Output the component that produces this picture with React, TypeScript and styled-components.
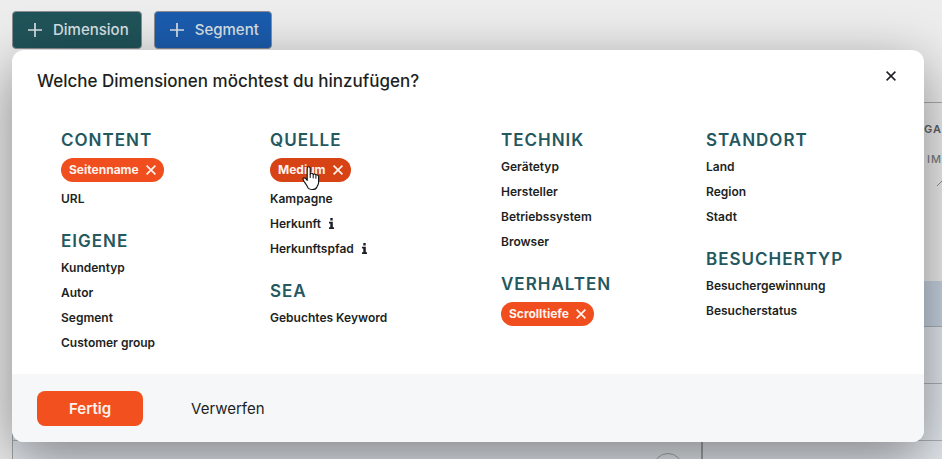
import React from "react";
import styled, { createGlobalStyle } from "styled-components";

const GlobalStyle = createGlobalStyle`
  *, *::before, *::after { box-sizing: border-box; }
  body {
    margin: 0;
    background: #ededee;
    color: #1d1f22;
    font-family: Inter, "Liberation Sans", sans-serif;
  }
  button { font: inherit; color: inherit; cursor: pointer; }
`;

const Page = styled.main`
  position: relative;
  min-height: 100vh;
  overflow: hidden;
  background: #ededee;
`;

const Toolbar = styled.div`
  display: flex;
  gap: 12px;
  padding: 11px 12px 0;
`;

const AddButton = styled.button<{ $color: string }>`
  display: flex;
  align-items: center;
  gap: 11px;
  height: 38px;
  padding: 0 12px 0 15px;
  border: 1px solid #8b8f93;
  border-radius: 4px;
  background: ${(p) => p.$color};
  color: #d9e0e4;
  font-size: 15px;
  font-weight: 500;
  line-height: 22px;
`;

const Report = styled.section`
  position: absolute;
  inset: 102px 0 0 12px;
  display: grid;
  grid-template-columns: 689fr 241fr;
  overflow: hidden;
  border-top: 1px solid #a9abad;
  border-left: 1px solid #a0a5a9;
`;

const ReportColumn = styled.div`
  display: flex;
  flex-direction: column;
  & + & { border-left: 2px solid #a0a5a9; }
`;

const ReportHead = styled.div`
  display: flex;
  flex-direction: column;
  align-items: flex-end;
  gap: 14px;
  height: 178px;
  padding-top: 18px;
  color: #5d6064;
  font-size: 11px;
  font-weight: 600;
  line-height: 16px;
  letter-spacing: 1px;
`;

const SubHead = styled.span`
  color: #7d8084;
  font-weight: 500;
`;

const ReportRow = styled.div<{ $active?: boolean }>`
  display: flex;
  flex: none;
  justify-content: flex-end;
  height: ${(p) => (p.$active ? 46 : 57)}px;
  padding: 12px 18px;
  border-bottom: 1px solid #abb1b8;
  background: ${(p) => (p.$active ? "#c6d3e1" : "#e3e8ed")};
`;

const Circle = styled.span`
  width: 30px;
  height: 30px;
  border: 1px solid #a0a5a9;
  border-radius: 50%;
`;

const Dialog = styled.section`
  position: absolute;
  top: 50px;
  left: 12px;
  right: 18px;
  border-radius: 12px;
  background: #fff;
  box-shadow: 0 16px 56px rgba(0, 0, 0, 0.44);
`;

const DialogHeader = styled.header`
  display: flex;
  align-items: center;
  justify-content: space-between;
  padding: 16px 23px 0 25px;
`;

const Title = styled.h1`
  margin: 0;
  font-size: 17px;
  font-weight: 500;
  line-height: 30px;
`;

const CloseButton = styled.button`
  display: flex;
  align-items: center;
  justify-content: center;
  width: 20px;
  height: 20px;
  margin-bottom: 10px;
  padding: 0;
  border: 0;
  background: none;
`;

const Columns = styled.div`
  display: grid;
  grid-template-columns: 209fr 231fr 205fr 194fr;
  padding: 30px 24px 19px 49px;
`;

const Column = styled.div`
  display: flex;
  flex-direction: column;
  gap: 16px;
`;

const GroupTitle = styled.h2`
  margin: 0;
  color: #24585f;
  font-size: 17px;
  font-weight: 600;
  line-height: 28px;
  letter-spacing: 1px;
`;

const List = styled.ul`
  margin: 0;
  padding: 0;
  list-style: none;
`;

const Item = styled.li<{ $selected: boolean }>`
  display: flex;
  align-items: center;
  height: ${(p) => (p.$selected ? 32 : 25)}px;
`;

const Option = styled.button`
  display: flex;
  align-items: center;
  gap: 8px;
  padding: 0;
  border: 0;
  background: none;
  font-size: 12px;
  font-weight: 600;
  line-height: 20px;
`;

const Chip = styled.button<{ $hover?: boolean }>`
  position: relative;
  display: flex;
  align-items: center;
  gap: 7px;
  height: 24px;
  padding: 0 8px;
  border: 0;
  border-radius: 12px;
  background: ${(p) => (p.$hover ? "#d84315" : "#f04e1e")};
  color: #fff3ed;
  font-size: 12px;
  font-weight: 700;
  line-height: 20px;
`;

const Pointer = styled.svg`
  position: absolute;
  top: 8px;
  left: 32px;
  z-index: 1;
`;

const Footer = styled.footer`
  display: flex;
  align-items: center;
  gap: 16px;
  padding: 17px 25px 16px;
  border-radius: 0 0 12px 12px;
  background: #f5f7f9;
`;

const FooterButton = styled.button<{ $primary?: boolean }>`
  height: 35px;
  padding: 0 32px;
  border: 0;
  border-radius: 8px;
  background: ${(p) => (p.$primary ? "#f2501e" : "transparent")};
  color: ${(p) => (p.$primary ? "#fff3ed" : "#1d1f22")};
  font-size: 15px;
  font-weight: ${(p) => (p.$primary ? 600 : 400)};
  line-height: 20px;
`;

const Plus = () => (
  <svg width="14" height="14" viewBox="0 0 14 14" stroke="currentColor" strokeWidth="1.7" aria-hidden>
    <path d="M7 0v14M0 7h14" />
  </svg>
);

const Cross = ({ width = 1.7 }: { width?: number }) => (
  <svg width="10" height="10" viewBox="0 0 10 10" stroke="currentColor" strokeWidth={width} aria-hidden>
    <path d="M.6.6l8.8 8.8M9.4.6L.6 9.4" />
  </svg>
);

const Info = () => (
  <svg width="5" height="11" viewBox="0 0 5 11" fill="currentColor" aria-label="Info">
    <path d="M1.3 0h2.4v2.4H1.3zM0 3.7h3.8v5.6H5V11H0V9.3h1.3V5.4H0z" />
  </svg>
);

const HandPointer = () => (
  <Pointer width="18" height="25" viewBox="0 0 18 25" aria-hidden>
    <path
      d="M5.2 2.4c0-2.2 3-2.2 3 0v5.8c.3-1.3 2.8-1.3 3 .5.4-1 2.5-.9 2.7.6.6-.9 2.7-.5 2.7 1.2v6.2c0 2-1.3 3-1.7 4.3-.5 1.5-1.6 2.5-4.3 2.5-3 0-4.3-.6-5-2.4-.6-1.8-2-3.2-3.3-5.3-.8-1.4-1.6-2.4-1.3-3.2.5-1.2 2.1-.8 3 .3l1.2 1.5z"
      fill="#fff"
      stroke="#111"
      strokeWidth="1.1"
      strokeLinejoin="round"
    />
    <path d="M8.2 8v4M11.2 8.8v3.6M13.9 9.5v3.2" stroke="#111" strokeWidth="1" />
  </Pointer>
);

type Entry = { label: string; selected?: boolean; hover?: boolean; info?: boolean };
type Group = { title: string; entries: Entry[] };

const columns: Group[][] = [
  [
    { title: "CONTENT", entries: [{ label: "Seitenname", selected: true }, { label: "URL" }] },
    {
      title: "EIGENE",
      entries: [{ label: "Kundentyp" }, { label: "Autor" }, { label: "Segment" }, { label: "Customer group" }],
    },
  ],
  [
    {
      title: "QUELLE",
      entries: [
        { label: "Medium", selected: true, hover: true },
        { label: "Kampagne" },
        { label: "Herkunft", info: true },
        { label: "Herkunftspfad", info: true },
      ],
    },
    { title: "SEA", entries: [{ label: "Gebuchtes Keyword" }] },
  ],
  [
    {
      title: "TECHNIK",
      entries: [{ label: "Gerätetyp" }, { label: "Hersteller" }, { label: "Betriebssystem" }, { label: "Browser" }],
    },
    { title: "VERHALTEN", entries: [{ label: "Scrolltiefe", selected: true }] },
  ],
  [
    { title: "STANDORT", entries: [{ label: "Land" }, { label: "Region" }, { label: "Stadt" }] },
    { title: "BESUCHERTYP", entries: [{ label: "Besuchergewinnung" }, { label: "Besucherstatus" }] },
  ],
];

function DimensionItem({ label, selected = false, hover, info }: Entry) {
  return (
    <Item $selected={selected}>
      {selected ? (
        <Chip type="button" aria-pressed="true" $hover={hover}>
          {label}
          <Cross />
          {hover && <HandPointer />}
        </Chip>
      ) : (
        <Option type="button">
          {label}
          {info && <Info />}
        </Option>
      )}
    </Item>
  );
}

export default function App() {
  return (
    <Page>
      <GlobalStyle />
      <Toolbar>
        <AddButton type="button" $color="#20545a">
          <Plus />
          Dimension
        </AddButton>
        <AddButton type="button" $color="#1b5cae">
          <Plus />
          Segment
        </AddButton>
      </Toolbar>
      <Report aria-hidden>
        <ReportColumn>
          <ReportHead />
          <ReportRow $active />
          <ReportRow />
          <ReportRow />
          <ReportRow>
            <Circle />
          </ReportRow>
        </ReportColumn>
        <ReportColumn>
          <ReportHead>
            <span>GA</span>
            <SubHead>T IM</SubHead>
            <svg width="5" height="5" viewBox="0 0 5 5" stroke="#8f9296">
              <path d="M0 5l5-5" />
            </svg>
          </ReportHead>
          <ReportRow $active />
          <ReportRow />
          <ReportRow />
          <ReportRow />
        </ReportColumn>
      </Report>
      <Dialog role="dialog" aria-labelledby="dialog-title">
        <DialogHeader>
          <Title id="dialog-title">Welche Dimensionen möchtest du hinzufügen?</Title>
          <CloseButton type="button" aria-label="Schließen">
            <Cross width={1.5} />
          </CloseButton>
        </DialogHeader>
        <Columns>
          {columns.map((groups) => (
            <Column key={groups[0].title}>
              {groups.map((group) => (
                <section key={group.title}>
                  <GroupTitle>{group.title}</GroupTitle>
                  <List>
                    {group.entries.map((entry) => (
                      <DimensionItem key={entry.label} {...entry} />
                    ))}
                  </List>
                </section>
              ))}
            </Column>
          ))}
        </Columns>
        <Footer>
          <FooterButton type="button" $primary>
            Fertig
          </FooterButton>
          <FooterButton type="button">Verwerfen</FooterButton>
        </Footer>
      </Dialog>
    </Page>
  );
}
